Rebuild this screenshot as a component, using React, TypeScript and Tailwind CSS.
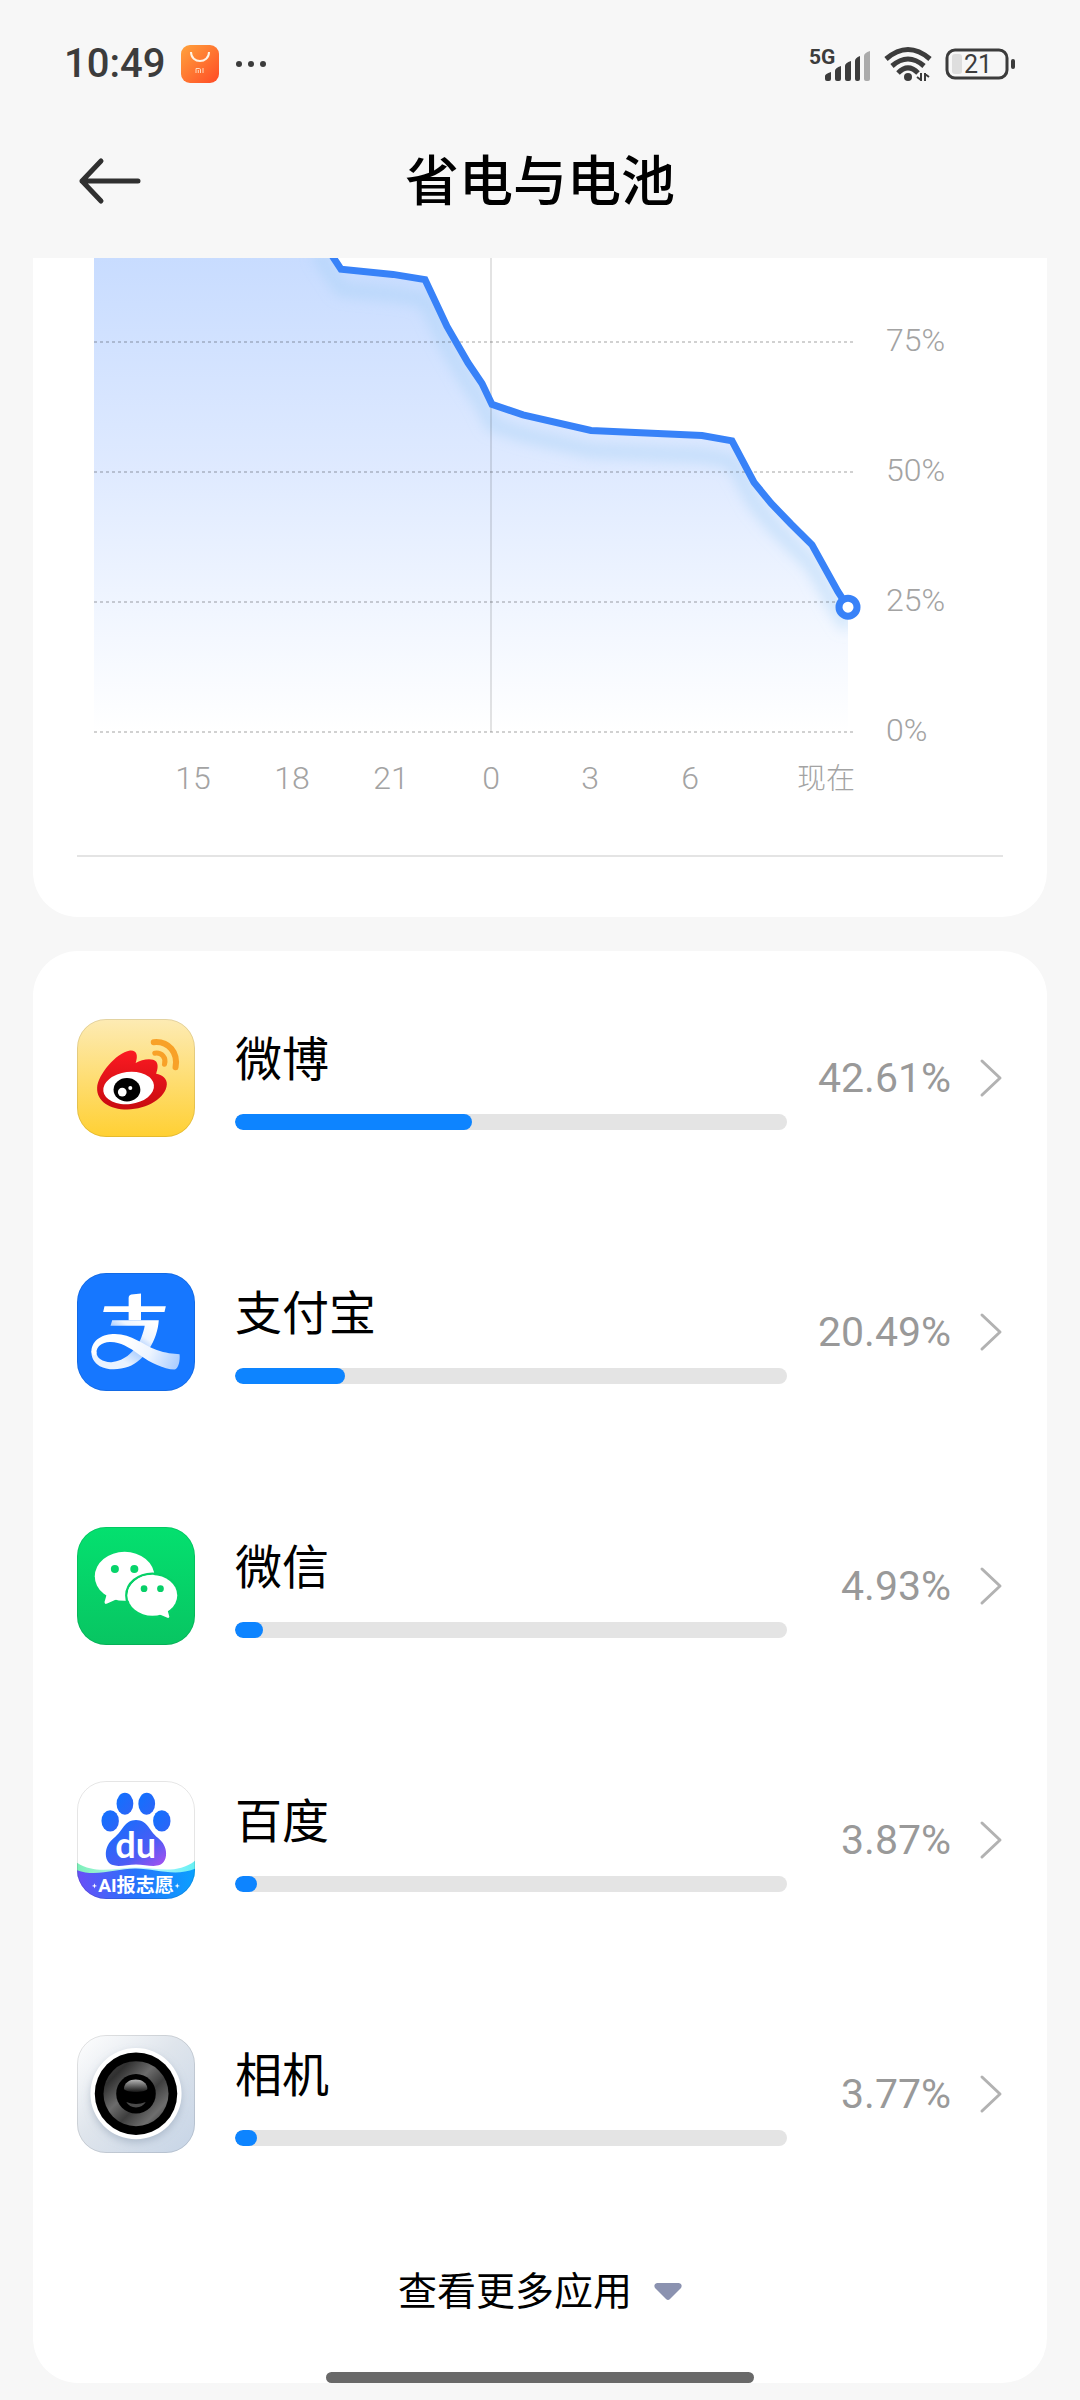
import type { ReactNode } from "react";

interface AppUsage {
  name: string;
  percent: string;
  // whole-number share that the bar is filled with
  fill: number;
  icon: ReactNode;
}

// [x in the plot, battery level in %]
const LEVELS: [number, number][] = [
  [284, 96],
  [308, 89],
  [360, 88],
  [392, 87],
  [414, 78],
  [435, 71],
  [449, 67],
  [459, 63],
  [490, 61],
  [558, 58],
  [669, 57],
  [699, 56],
  [721, 48],
  [738, 44],
  [758, 40],
  [779, 36],
  [805, 27],
  [815, 24],
];

const HOURS = [
  { label: "15", x: 160 },
  { label: "18", x: 259 },
  { label: "21", x: 358 },
  { label: "0", x: 458 },
  { label: "3", x: 557 },
  { label: "6", x: 657 },
];

const PLOT_LEFT = 61;
const PLOT_RIGHT = 820;
const PLOT_BOTTOM = 474;

const levelY = (level: number) => PLOT_BOTTOM - level * 5.2;

function BatteryChart() {
  const line = LEVELS.map(([x, level]) => `${x} ${levelY(level)}`).join(" L");
  const area = `M${PLOT_LEFT} -30 H284 L${line} V${PLOT_BOTTOM} H${PLOT_LEFT}Z`;
  const [endX, endLevel] = LEVELS[LEVELS.length - 1];

  return (
    <svg
      viewBox="0 0 1014 540"
      className="block w-full"
      role="img"
      aria-label="电池电量"
    >
      <defs>
        <linearGradient id="area" gradientUnits="userSpaceOnUse" x1="0" y1="0" x2="0" y2="474">
          <stop offset="0" stopColor="#c8dcff" />
          <stop offset="0.45" stopColor="#dfeaff" />
          <stop offset="0.75" stopColor="#f1f6ff" />
          <stop offset="1" stopColor="#ffffff" />
        </linearGradient>
        <filter id="glow" x="-10%" y="-10%" width="120%" height="130%">
          <feGaussianBlur stdDeviation="7" />
        </filter>
        <clipPath id="areaClip">
          <path d={area} />
        </clipPath>
      </defs>

      <path d={area} fill="url(#area)" />
      <g clipPath="url(#areaClip)">
        <path
          d={`M${line}`}
          transform="translate(0 20)"
          fill="none"
          stroke="#a4d0f5"
          strokeOpacity="0.5"
          strokeWidth="12"
          filter="url(#glow)"
        />
      </g>

      <path d="M458 0V474" stroke="#000" strokeOpacity="0.11" strokeWidth="2" />
      {[75, 50, 25, 0].map((level) => (
        <g key={level}>
          <path
            d={`M${PLOT_LEFT} ${levelY(level)}H${PLOT_RIGHT}`}
            stroke="#000"
            strokeOpacity="0.18"
            strokeWidth="2"
            strokeDasharray="3 3"
          />
          <text x="853" y={levelY(level) + 9} fontSize="32" fontWeight="300" fill="#a3a3a3">
            {level}%
          </text>
        </g>
      ))}
      {HOURS.map(({ label, x }) => (
        <text key={label} x={x} y="531" fontSize="32" fontWeight="300" fill="#a3a3a3" textAnchor="middle">
          {label}
        </text>
      ))}
      <text x="822" y="531" fontSize="29" fontWeight="300" fill="#a3a3a3" textAnchor="end">
        现在
      </text>

      <path d={`M${line}`} fill="none" stroke="#3882f8" strokeWidth="7" />
      <circle cx={endX} cy={levelY(endLevel)} r="9" fill="#fff" stroke="#3882f8" strokeWidth="7" />
    </svg>
  );
}

function WeiboIcon() {
  return (
    <svg viewBox="52 57 352 352" className="size-full">
      <defs>
        <linearGradient id="wbBg" x1="0" y1="0" x2="0" y2="1">
          <stop offset="0" stopColor="#fdebb4" />
          <stop offset="1" stopColor="#ffd033" />
        </linearGradient>
        <linearGradient id="wbRed" x1="0" y1="0" x2="0" y2="1">
          <stop offset="0" stopColor="#fb1a22" />
          <stop offset="1" stopColor="#c80b10" />
        </linearGradient>
      </defs>
      <path d="M52 57h352v352H52z" fill="url(#wbBg)" />
      <path
        d="M112 262C114 224 168 158 210 151C230 149 235 165 227 188C245 178 276 172 288 184C295 193 293 206 288 220C306 223 321 234 320 252C318 292 262 327 202 327C150 327 110 302 112 262Z"
        fill="url(#wbRed)"
      />
      <ellipse cx="206" cy="263" rx="76" ry="48" fill="#fff" transform="rotate(-7 206 263)" />
      <ellipse cx="201" cy="268" rx="40" ry="35" fill="#000" />
      <circle cx="187" cy="275" r="13" fill="#fff" />
      <circle cx="211" cy="263" r="6" fill="#fff" />
      <g fill="none" stroke="#f8a128" strokeLinecap="round">
        <path d="M281 126C326 122 354 158 346 201" strokeWidth="18" />
        <path d="M284 159C305 156 319 173 313 192" strokeWidth="15" />
      </g>
    </svg>
  );
}

function AlipayIcon() {
  return (
    <svg viewBox="52 70 352 352" className="size-full">
      <defs>
        <linearGradient id="aliDown" gradientUnits="userSpaceOnUse" x1="285" y1="220" x2="200" y2="340">
          <stop offset="0" stopColor="#fff" />
          <stop offset="0.35" stopColor="#eef5ff" />
          <stop offset="0.6" stopColor="#9fc6ff" />
          <stop offset="1" stopColor="#eaf3ff" />
        </linearGradient>
        <linearGradient id="aliTail" gradientUnits="userSpaceOnUse" x1="200" y1="270" x2="358" y2="340">
          <stop offset="0" stopColor="#fff" />
          <stop offset="0.45" stopColor="#eef5ff" />
          <stop offset="1" stopColor="#a9ccff" />
        </linearGradient>
      </defs>
      <path d="M52 70h352v352H52z" fill="#1677ff" />
      <path d="M206 145Q206 136 214 134L243 131V169H317L313 186H243V211H206V186H130L134 169H206Z" fill="#fff" />
      <path
        d="M157 211H296C292 270 256 330 205 350C176 360 142 360 120 348C103 338 94 322 95 303C96 300 108 300 110 306C110 325 130 337 155 336C195 334 228 300 243 265C248 250 252 240 254 227H152Z"
        fill="url(#aliDown)"
      />
      <path
        d="M95 303C97 268 130 252 165 252C215 252 250 285 290 300C315 309 340 312 358 312C360 332 355 354 343 358C310 356 272 338 240 315C205 290 180 275 150 276C125 277 110 290 110 308C108 320 96 318 95 303Z"
        fill="url(#aliTail)"
      />
    </svg>
  );
}

function WechatIcon() {
  return (
    <svg viewBox="52 82 352 352" className="size-full">
      <defs>
        <linearGradient id="wxBg" x1="0" y1="0" x2="0" y2="1">
          <stop offset="0" stopColor="#04e06f" />
          <stop offset="1" stopColor="#08c562" />
        </linearGradient>
      </defs>
      <path d="M52 82h352v352H52z" fill="url(#wxBg)" />
      <ellipse cx="194" cy="229" rx="89" ry="73" fill="#fff" />
      <path d="M141 282L134 306Q134 314 142 310L172 297Z" fill="#fff" />
      <circle cx="165" cy="207" r="12" fill="#06d46a" />
      <circle cx="223" cy="207" r="12" fill="#06d46a" />
      <ellipse cx="277" cy="286" rx="78" ry="65" fill="none" stroke="#06d067" strokeWidth="7" />
      <ellipse cx="277" cy="286" rx="74" ry="61" fill="#fff" />
      <path d="M297 342L322 353Q328 354 327 348L321 325Z" fill="#fff" />
      <circle cx="252" cy="266" r="10" fill="#06cf67" />
      <circle cx="301" cy="266" r="10" fill="#06cf67" />
    </svg>
  );
}

function BaiduIcon() {
  return (
    <svg viewBox="52 64 352 352" className="size-full">
      <defs>
        <linearGradient id="bdPaw" gradientUnits="userSpaceOnUse" x1="190" y1="190" x2="290" y2="320">
          <stop offset="0" stopColor="#1d6bfb" />
          <stop offset="0.6" stopColor="#4b5cf5" />
          <stop offset="1" stopColor="#9a52f0" />
        </linearGradient>
        <linearGradient id="bdToe" x1="0" y1="0" x2="1" y2="1">
          <stop offset="0" stopColor="#0f72ff" />
          <stop offset="1" stopColor="#2f63f6" />
        </linearGradient>
        <linearGradient id="bdBand" x1="0" y1="0" x2="1" y2="0">
          <stop offset="0" stopColor="#6a4ff7" />
          <stop offset="0.5" stopColor="#2673fb" />
          <stop offset="1" stopColor="#0aa0ff" />
        </linearGradient>
        <linearGradient id="bdWave" x1="0" y1="0" x2="1" y2="0">
          <stop offset="0" stopColor="#7cf0b8" />
          <stop offset="0.5" stopColor="#c8f6ff" />
          <stop offset="1" stopColor="#66f0f4" />
        </linearGradient>
      </defs>
      <path d="M52 64h352v352H52z" fill="#fff" />
      <g fill="url(#bdToe)">
        <ellipse cx="195" cy="132" rx="25" ry="33" />
        <ellipse cx="260" cy="132" rx="25" ry="33" />
        <ellipse cx="151" cy="183" rx="26" ry="32" />
        <ellipse cx="305" cy="183" rx="26" ry="32" />
      </g>
      <path
        d="M228 180C262 180 268 213 293 233C326 258 324 303 300 314C280 322 255 313 228 313C200 313 177 322 156 314C132 303 130 258 163 233C188 213 194 180 228 180Z"
        fill="url(#bdPaw)"
      />
      <text x="227" y="294" fontSize="108" fontWeight="700" fill="#fff" textAnchor="middle" className="font-[Lato,sans-serif]">
        du
      </text>
      <path d="M52 308C110 345 170 322 228 322C285 322 350 345 404 302V350H52Z" fill="url(#bdWave)" />
      <path d="M52 330C110 352 170 324 228 325C285 326 345 350 404 326V416H52Z" fill="url(#bdBand)" />
      <text x="228" y="394" fontSize="57" fontWeight="700" fill="#fff" textAnchor="middle">
        AI报志愿
      </text>
      <path
        d="M104 369l2 6 6 2-6 2-2 6-2-6-6-2 6-2zM351 369l2 6 6 2-6 2-2 6-2-6-6-2 6-2z"
        fill="#fff"
      />
    </svg>
  );
}

function CameraIcon() {
  return (
    <svg viewBox="52 76 352 352" className="size-full">
      <defs>
        <linearGradient id="camBg" x1="0" y1="0" x2="1" y2="1">
          <stop offset="0" stopColor="#ffffff" />
          <stop offset="0.45" stopColor="#dfe5ec" />
          <stop offset="1" stopColor="#c6d4e6" />
        </linearGradient>
        <linearGradient id="camRing" x1="0" y1="0" x2="1" y2="1">
          <stop offset="0" stopColor="#4a4a4a" />
          <stop offset="0.2" stopColor="#303030" />
          <stop offset="0.42" stopColor="#6c6c6c" />
          <stop offset="0.6" stopColor="#3e3e3e" />
          <stop offset="0.8" stopColor="#6e6e6e" />
          <stop offset="1" stopColor="#2e2e2e" />
        </linearGradient>
        <linearGradient id="camShine" x1="0" y1="0" x2="0" y2="1">
          <stop offset="0" stopColor="#b8b8b8" />
          <stop offset="1" stopColor="#141414" />
        </linearGradient>
        <filter id="camShadow" x="-20%" y="-20%" width="140%" height="140%">
          <feGaussianBlur stdDeviation="12" />
        </filter>
      </defs>
      <path d="M52 76h352v352H52z" fill="url(#camBg)" />
      <circle cx="228" cy="262" r="134" fill="#8494aa" fillOpacity="0.5" filter="url(#camShadow)" />
      <circle cx="228" cy="251" r="136" fill="#fff" />
      <circle cx="228" cy="251" r="123" fill="#000" />
      <circle cx="228" cy="251" r="97" fill="url(#camRing)" />
      <circle cx="228" cy="251" r="59" fill="#000" />
      <path d="M192 237C192 199 262 199 262 237C255 249 200 249 192 237Z" fill="url(#camShine)" />
      <path d="M199 276Q228 287 257 276Q248 292 228 292Q208 292 199 276Z" fill="#4a4a4a" />
    </svg>
  );
}

const APPS: AppUsage[] = [
  { name: "微博", percent: "42.61%", fill: 43, icon: <WeiboIcon /> },
  { name: "支付宝", percent: "20.49%", fill: 20, icon: <AlipayIcon /> },
  { name: "微信", percent: "4.93%", fill: 5, icon: <WechatIcon /> },
  { name: "百度", percent: "3.87%", fill: 4, icon: <BaiduIcon /> },
  { name: "相机", percent: "3.77%", fill: 4, icon: <CameraIcon /> },
];

function StatusBar() {
  return (
    <div className="flex h-32 items-center justify-between pr-[62px] pl-16 text-[#3c3c3c]">
      <div className="flex items-center">
        <span className="text-[40px] leading-none font-medium">10:49</span>
        <svg viewBox="0 0 38 38" className="ml-4 size-[38px]">
          <defs>
            <linearGradient id="store" x1="0" y1="0" x2="1" y2="1">
              <stop offset="0" stopColor="#ffa33c" />
              <stop offset="1" stopColor="#ff4a26" />
            </linearGradient>
          </defs>
          <rect width="38" height="38" rx="9" fill="url(#store)" />
          <path d="M10 7C10 19 28 19 28 7" fill="none" stroke="#fff3e4" strokeWidth="2" />
          <path d="M15 28V23.500H18.500Q19.500 23.500 19.500 25V28M17.300 25V28M22 23V28" fill="none" stroke="#ffd9bd" strokeWidth="1" />
        </svg>
        <svg viewBox="0 0 32 8" className="ml-4 h-2 w-8" fill="currentColor">
          <circle cx="4" cy="4" r="3" />
          <circle cx="16" cy="4" r="3" />
          <circle cx="28" cy="4" r="3" />
        </svg>
      </div>

      <div className="flex items-center">
        <svg viewBox="0 0 64 40" className="h-10 w-16" fill="currentColor">
          <text x="1" y="20" fontSize="21" fontWeight="700">
            5G
          </text>
          <g transform="translate(0 2)">
            <path d="M17 35V30Q17 28 23 26V33Q23 35 21 35H19Q17 35 17 33ZM27 33V25Q27 22 33 20V33Q33 35 31 35H29Q27 35 27 33ZM37 33V20Q37 17 43 15V33Q43 35 41 35H39Q37 35 37 33ZM47 33V15Q47 12 52 10V33Q52 35 50 35H49Q47 35 47 33Z" />
            <path d="M56 33V10Q56 7 62 5V33Q62 35 60 35H58Q56 35 56 33Z" fill="#ababab" />
          </g>
        </svg>
        <svg viewBox="0 0 48 36" className="ml-3 h-9 w-12" fill="none" stroke="currentColor" strokeWidth="5">
          <path d="M2 13Q24 -6 46 13" />
          <path d="M8 20Q24 6 40 20" />
          <path d="M14 27Q24 17 34 27" />
          <circle cx="24" cy="31" r="4" fill="currentColor" stroke="none" />
          <path d="M37 27V35M37 34L33 31M41 35V27M41 28L45 31" strokeWidth="2" />
        </svg>
        <svg viewBox="0 0 74 34" className="ml-3 h-[34px] w-[74px]">
          <rect x="3" y="3" width="60" height="28" rx="8" fill="none" stroke="currentColor" strokeWidth="3" />
          <rect x="8" y="7" width="10" height="20" rx="3" fill="#dedede" />
          <rect x="67" y="12" width="4" height="10" rx="2" fill="currentColor" />
          <text x="34" y="26" fontSize="25" fill="currentColor" textAnchor="middle">
            21
          </text>
        </svg>
      </div>
    </div>
  );
}

function AppRow({ app }: { app: AppUsage }) {
  return (
    <li>
      <button type="button" className="flex w-full items-center text-left">
        <span className="size-[118px] shrink-0 overflow-hidden rounded-[29px] outline -outline-offset-1 outline-black/10">
          {app.icon}
        </span>
        <span className="ml-10 flex flex-1 flex-col gap-7 pt-2">
          <span className="text-[47px] leading-[52px] text-black">{app.name}</span>
          <span className="block h-4 overflow-hidden rounded-full bg-[#e4e4e4]">
            <span
              className="block h-full rounded-full bg-[#0d84ff]"
              style={{ width: `${app.fill}%` }}
            />
          </span>
        </span>
        <span className="w-[164px] text-right text-[41px] leading-none text-[#999999]">
          {app.percent}
        </span>
        <svg viewBox="0 0 24 40" className="ml-7 h-10 w-6 shrink-0" fill="none" stroke="#b2b2b2" strokeWidth="3" strokeLinecap="round" strokeLinejoin="round">
          <path d="M3 3L21 20L3 37" />
        </svg>
      </button>
    </li>
  );
}

export default function App() {
  return (
    <div className="min-h-screen bg-[#f7f7f7] pb-4 font-[Roboto,'Noto_Sans_CJK_SC',sans-serif]">
      <StatusBar />

      <header className="mb-6 grid h-[106px] grid-cols-[1fr_auto_1fr] items-center px-[77px]">
        <button type="button" aria-label="返回" className="justify-self-start">
          <svg viewBox="0 0 66 48" className="h-12 w-[66px]" fill="none" stroke="#303030" strokeWidth="5" strokeLinecap="round" strokeLinejoin="round">
            <path d="M61 24H5M24 4L5 24L24 44" />
          </svg>
        </button>
        <h1 className="pt-1 text-[54px] leading-none font-medium text-black">省电与电池</h1>
      </header>

      <main className="flex flex-col gap-[34px] px-[33px]">
        <section className="rounded-b-[45px] bg-white pb-[60px]">
          <BatteryChart />
          <hr className="mx-11 mt-[57px] border-t-2 border-[#e4e4e4]" />
        </section>

        <section className="rounded-[45px] bg-white px-11 pt-[68px]">
          <ul className="flex flex-col gap-[136px]">
            {APPS.map((app) => (
              <AppRow key={app.name} app={app} />
            ))}
          </ul>
          <button
            type="button"
            className="mt-12 flex h-[182px] w-full items-center justify-center gap-[22px] text-[39px] text-black"
          >
            查看更多应用
            <svg viewBox="0 0 28 18" className="h-[18px] w-7">
              <path d="M3 0H25Q29 1 27 5L16 16Q14 18 12 16L1 5Q-1 1 3 0Z" fill="#8b92b0" />
            </svg>
          </button>
        </section>
      </main>

      <div className="fixed bottom-[17px] left-1/2 h-[11px] w-[428px] -translate-x-1/2 rounded-full bg-[#696969]" />
    </div>
  );
}
